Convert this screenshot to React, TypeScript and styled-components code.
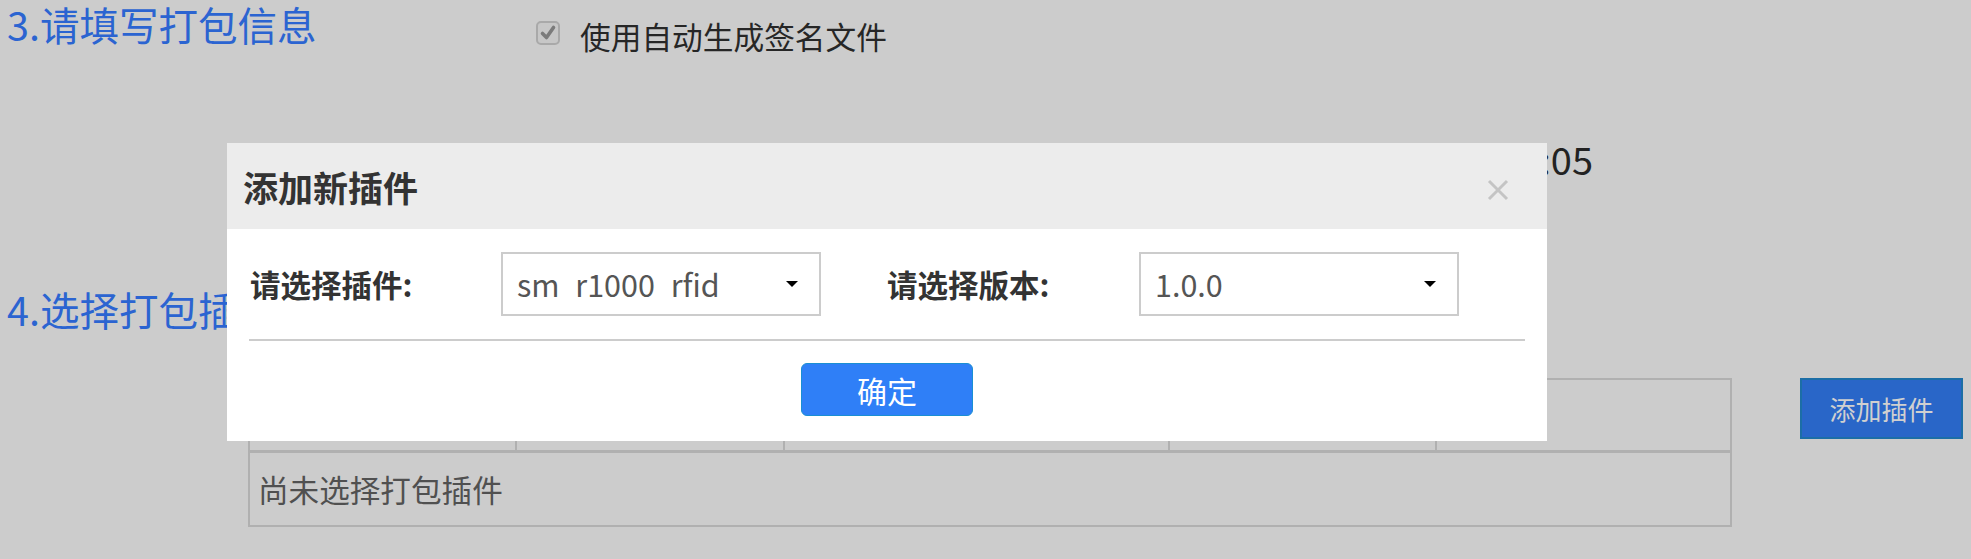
import React from "react";
import styled, { createGlobalStyle } from "styled-components";

const Global = createGlobalStyle`
  html, body { margin: 0; padding: 0; background: #cccccc; }
  body { font-family: "Noto Sans CJK SC", "Noto Sans", sans-serif; overflow: hidden; }
  * { box-sizing: border-box; }
`;

const Page = styled.div`
  width: 1971px;
  height: 559px;
  padding-left: 7px;
  position: relative;
`;

const Section = styled.section<{ $top?: number }>`
  display: flex;
  flex-direction: column;
  margin-top: ${(p) => p.$top ?? 0}px;
`;

const SectionRow = styled.div`
  display: flex;
  align-items: flex-start;
`;

const Heading = styled.h2<{ $width?: number }>`
  margin: 0;
  width: ${(p) => (p.$width ? `${p.$width}px` : "auto")};
  flex-shrink: 0;
  font-size: 39.5px;
  line-height: 48px;
  font-weight: 400;
  color: #2b64d1;
  white-space: nowrap;
`;

const Fields = styled.div`
  display: flex;
  flex-direction: column;
`;

const CheckRow = styled.label`
  display: flex;
  align-items: center;
  gap: 20px;
  margin-top: 12px;
  height: 46px;
  font-size: 30.7px;
  color: #262626;
`;

const CheckBox = styled.span`
  width: 24px;
  height: 24px;
  display: inline-flex;
  margin-top: -5px;
`;

const ExpiryRow = styled.div`
  margin-top: 76px;
  width: 1057px;
  text-align: right;
  font-size: 38px;
  line-height: 50px;
  color: #222;
  white-space: nowrap;
`;

const TableArea = styled.div`
  display: flex;
  align-items: flex-start;
  gap: 68px;
  margin-top: 45px;
  margin-left: 241px;
`;

const Table = styled.div`
  width: 1484px;
  border: 2px solid #b0b0b0;
  display: flex;
  flex-direction: column;
`;

const HeadRow = styled.div`
  display: grid;
  grid-template-columns: 267px 268px 385px 267px 1fr;
  height: 73px;
  border-bottom: 3px solid #b0b0b0;
`;

const HeadCell = styled.div`
  border-right: 2px solid #b0b0b0;
  &:last-child { border-right: none; }
`;

const EmptyRow = styled.div`
  height: 72px;
  display: flex;
  align-items: center;
  padding-left: 8px;
  font-size: 30.6px;
  color: #505050;
`;

const AddButton = styled.button`
  width: 163px;
  height: 61px;
  background: #2966c8;
  border: 2px solid #1c6ea6;
  color: #d0d0d0;
  font-family: inherit;
  font-size: 26px;
  padding: 0;
  cursor: pointer;
`;

const Modal = styled.div`
  position: fixed;
  left: 227px;
  top: 143px;
  width: 1320px;
  background: #ffffff;
  z-index: 10;
`;

const ModalHeader = styled.div`
  height: 86px;
  background: #ececec;
  display: flex;
  align-items: center;
  justify-content: space-between;
  padding: 0 38px 0 16px;
`;

const ModalTitle = styled.h3`
  margin: 0;
  font-size: 35px;
  font-weight: 700;
  color: #333;
`;

const CloseButton = styled.button`
  width: 22px;
  height: 22px;
  padding: 0;
  border: none;
  background: transparent;
  display: flex;
  margin-top: 8px;
  cursor: pointer;
`;

const ModalBody = styled.div`
  padding: 23px 22px 25px;
`;

const FormRow = styled.div`
  display: flex;
  align-items: center;
  padding-left: 1px;
`;

const FieldLabel = styled.span<{ $width: number }>`
  width: ${(p) => p.$width}px;
  flex-shrink: 0;
  font-size: 30.5px;
  font-weight: 700;
  color: #333;
`;

const Select = styled.div<{ $after?: number }>`
  width: 320px;
  height: 64px;
  border: 2px solid #cccccc;
  margin-right: ${(p) => p.$after ?? 0}px;
  display: flex;
  align-items: center;
  justify-content: space-between;
  padding: 0 21px 0 14px;
  font-size: 30.5px;
  color: #555;
  word-spacing: 9px;
`;

const Divider = styled.hr`
  margin: 23px 0 0;
  border: none;
  height: 2px;
  background: #cccccc;
`;

const Footer = styled.div`
  display: flex;
  justify-content: center;
  margin-top: 22px;
`;

const ConfirmButton = styled.button`
  width: 172px;
  height: 53px;
  border-radius: 6px;
  background: #2f7ff7;
  border: 1px solid #1a8fd3;
  color: #ffffff;
  font-family: inherit;
  font-size: 30px;
  padding: 0;
  cursor: pointer;
`;

const Caret = () => (
  <svg width="12" height="6" viewBox="0 0 12 6">
    <path d="M0 0 H12 L6 6 Z" fill="#000" />
  </svg>
);

export default function App() {
  return (
    <>
      <Global />
      <Page>
        <Section>
          <SectionRow>
            <Heading $width={529}>3.请填写打包信息</Heading>
            <Fields>
              <CheckRow>
                <CheckBox>
                  <svg width="24" height="24" viewBox="0 0 24 24">
                    <rect x="1" y="1" width="22" height="22" rx="4" fill="#c7c7c7" stroke="#a9a9a9" strokeWidth="2" />
                    <path d="M6.5 12.5 L10.5 16.5 L17.5 6.5" fill="none" stroke="#7b7b7b" strokeWidth="3.6" strokeLinecap="round" strokeLinejoin="round" />
                  </svg>
                </CheckBox>
                使用自动生成签名文件
              </CheckRow>
              <ExpiryRow>2099-12-31 23:59:05</ExpiryRow>
            </Fields>
          </SectionRow>
        </Section>
        <Section $top={101}>
          <Heading>4.选择打包插件</Heading>
          <TableArea>
            <Table>
              <HeadRow>
                <HeadCell />
                <HeadCell />
                <HeadCell />
                <HeadCell />
                <HeadCell />
              </HeadRow>
              <EmptyRow>尚未选择打包插件</EmptyRow>
            </Table>
            <AddButton>添加插件</AddButton>
          </TableArea>
        </Section>
      </Page>
      <Modal>
        <ModalHeader>
          <ModalTitle>添加新插件</ModalTitle>
          <CloseButton aria-label="关闭">
            <svg width="22" height="22" viewBox="0 0 22 22">
              <path d="M2 2 L20 20 M20 2 L2 20" stroke="#c4c4c4" strokeWidth="3" />
            </svg>
          </CloseButton>
        </ModalHeader>
        <ModalBody>
          <FormRow>
            <FieldLabel $width={251}>请选择插件:</FieldLabel>
            <Select $after={66}>
              <span>sm r1000 rfid</span>
              <Caret />
            </Select>
            <FieldLabel $width={252}>请选择版本:</FieldLabel>
            <Select>
              <span>1.0.0</span>
              <Caret />
            </Select>
          </FormRow>
          <Divider />
          <Footer>
            <ConfirmButton>确定</ConfirmButton>
          </Footer>
        </ModalBody>
      </Modal>
    </>
  );
}
